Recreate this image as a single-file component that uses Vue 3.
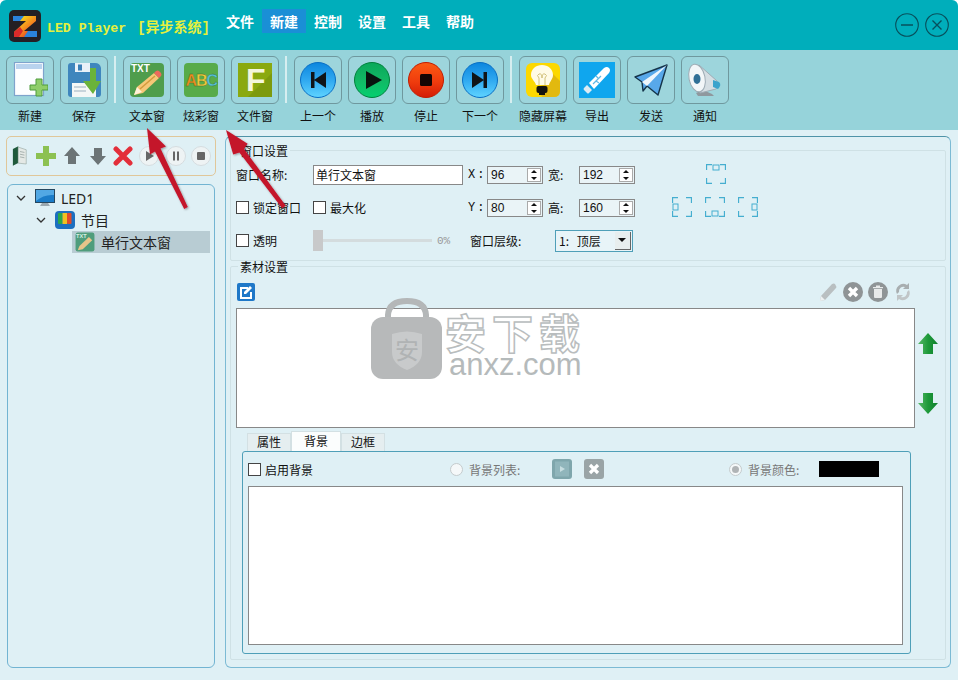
<script setup>
const menus = ['文件', '新建', '控制', '设置', '工具', '帮助']

// 工具列：null 是分隔線
const tools = [
  { label: '新建', icon: 'new' },
  { label: '保存', icon: 'save' },
  null,
  { label: '文本窗', icon: 'txt' },
  { label: '炫彩窗', icon: 'abc' },
  { label: '文件窗', icon: 'file' },
  null,
  { label: '上一个', icon: 'prev' },
  { label: '播放', icon: 'play' },
  { label: '停止', icon: 'stop' },
  { label: '下一个', icon: 'next' },
  null,
  { label: '隐藏屏幕', icon: 'bulb' },
  { label: '导出', icon: 'usb' },
  { label: '发送', icon: 'send' },
  { label: '通知', icon: 'notify' }
]

const discs = {
  prev: { grad: 'url(#gBlue)', ring: '#0a6fc4' },
  play: { grad: 'url(#gGreen)', ring: '#00803c' },
  stop: { grad: 'url(#gRed)', ring: '#c01c00' },
  next: { grad: 'url(#gBlue)', ring: '#0a6fc4' }
}

const aligns = [
  { col: 2, row: 1, shift: 1, mark: [7, 1, 6, 5] },
  { col: 1, row: 2, shift: 0, mark: [1, 7, 5, 6] },
  { col: 2, row: 2, shift: 0, mark: [7, 14, 6, 5] },
  { col: 3, row: 2, shift: 0, mark: [14, 7, 5, 6] }
]
</script>

<template>
  <div class="app">
    <!-- 標題列 -->
    <header class="titlebar">
      <svg class="logo" width="32" height="32" viewBox="0 0 32 32">
        <defs>
          <linearGradient id="gLogo" x1="0" y1="0" x2="1" y2="1">
            <stop offset="0.2" stop-color="#fbd31a" />
            <stop offset="0.55" stop-color="#f4861e" />
            <stop offset="0.85" stop-color="#dd3324" />
          </linearGradient>
        </defs>
        <rect width="32" height="32" rx="5" fill="#241f24" />
        <path d="M5 6h22v5L15 21h13v6H5v-5l12-11H5z" fill="url(#gLogo)" />
        <path d="M4 6h11l-4 5H4zM19 21h9v6H15z" fill="#2a82dc" />
        <path d="M5 22l6-5 3 4-4 6H5z" fill="#d92a2a" />
      </svg>
      <div class="app-name">LED Player<span class="app-sys">[异步系统]</span></div>
      <nav class="menu">
        <span v-for="m in menus" :key="m" class="menu-item" :class="{ active: m === '新建' }">{{ m }}</span>
      </nav>
      <div class="win-btns">
        <svg width="24" height="24" viewBox="0 0 24 24">
          <circle cx="12" cy="12" r="11.3" fill="none" stroke="#07505c" stroke-width="1.1" />
          <path d="M6 12h12" stroke="#07505c" stroke-width="1.6" />
        </svg>
        <svg width="24" height="24" viewBox="0 0 24 24">
          <circle cx="12" cy="12" r="11.3" fill="none" stroke="#07505c" stroke-width="1.1" />
          <path d="M7.5 7.5l9 9M16.5 7.5l-9 9" stroke="#07505c" stroke-width="1.4" />
        </svg>
      </div>
    </header>

    <!-- 工具列 -->
    <div class="toolbar">
      <svg width="0" height="0" class="defs">
        <defs>
          <linearGradient id="gBlue" x1="0" y1="0" x2="0" y2="1">
            <stop offset="0" stop-color="#0c86de" />
            <stop offset="0.5" stop-color="#2fa8f0" />
            <stop offset="1" stop-color="#5fd4ff" />
          </linearGradient>
          <linearGradient id="gGreen" x1="0" y1="0" x2="0" y2="1">
            <stop offset="0" stop-color="#0aa85a" />
            <stop offset="0.5" stop-color="#12b865" />
            <stop offset="1" stop-color="#05d070" />
          </linearGradient>
          <linearGradient id="gRed" x1="0" y1="0" x2="0" y2="1">
            <stop offset="0" stop-color="#fb5a12" />
            <stop offset="0.55" stop-color="#ef3c0e" />
            <stop offset="1" stop-color="#d41c06" />
          </linearGradient>
          <linearGradient id="gArrow" x1="0" y1="0" x2="1" y2="0">
            <stop offset="0" stop-color="#58b868" />
            <stop offset="0.5" stop-color="#1e9a3a" />
            <stop offset="1" stop-color="#0f7f2c" />
          </linearGradient>
        </defs>
      </svg>
      <template v-for="(t, i) in tools" :key="i">
        <div v-if="!t" class="tool-sep"></div>
        <div v-else class="tool">
          <div class="tool-btn">
            <svg width="36" height="36" viewBox="0 0 36 36">
              <template v-if="t.icon === 'new'">
                <rect x="2.5" y="0.500" width="29" height="33" fill="#fdfeff" stroke="#7fa3cc" stroke-width="1.2" />
                <rect x="4" y="2" width="26" height="5" fill="#b9d3ee" />
                <path d="M24 17h6v6h6v5h-6v6h-6v-6h-6v-5h6z" fill="#8fce6a" stroke="#4f9c3c" stroke-width="1" />
              </template>
              <template v-else-if="t.icon === 'save'">
                <path d="M2 4q0-3 3-3h24q5 0 6 5v26q0 3-3 3H5q-3 0-3-3z" fill="#3f86bd" />
                <rect x="9" y="1" width="15" height="9" fill="#e9f1f8" />
                <rect x="12" y="2.500" width="4" height="6" fill="#3a7fb6" />
                <rect x="6" y="21" width="24" height="14" fill="#f4f7f6" />
                <path d="M8 25h12M8 29h12" stroke="#9cb0bf" />
                <path d="M24 6h6v13h5L27 32 17 19h7z" fill="#6ab33a" />
              </template>
              <template v-else-if="t.icon === 'txt'">
                <rect x="1" y="1" width="34" height="34" rx="4" fill="#4f9d4c" />
                <text x="2" y="10" class="svg-txt" fill="#fff">TXT</text>
                <path d="M5 33l3-8 17-14 5 5-16 15z" fill="#f6c777" />
                <path d="M25 11l2-2q2-1 3 0l2 2q1 2 0 3l-2 2z" fill="#ec6a5c" />
                <path d="M5 33l3-8 5 5z" fill="#fff1d8" />
                <path d="M11 27l15-13" stroke="#d39a3c" stroke-width="1.500" />
              </template>
              <template v-else-if="t.icon === 'abc'">
                <rect x="1" y="1" width="34" height="34" rx="4" fill="#58ab49" />
                <text x="2.500" y="24" class="svg-abc" fill="#f08a1c">A</text>
                <text x="13" y="24" class="svg-abc" fill="#f0c83a">B</text>
                <text x="23.500" y="24" class="svg-abc" fill="#54c0d8">C</text>
              </template>
              <template v-else-if="t.icon === 'file'">
                <rect x="1" y="1" width="34" height="34" fill="#8aa90f" />
                <path d="M11 35L35 11v24z" fill="#7d9a0d" />
                <text x="9" y="29" class="svg-f" fill="#f4f6dc">F</text>
              </template>
              <template v-else-if="discs[t.icon]">
                <circle cx="18" cy="18" r="17.500" :fill="discs[t.icon].grad" :stroke="discs[t.icon].ring" stroke-width="1" />
                <path v-if="t.icon === 'prev'" d="M11 10h3.500v16H11zM26 10v16L14 18z" fill="#101418" />
                <path v-if="t.icon === 'play'" d="M12 9l16 9-16 9z" fill="#08140e" />
                <rect v-if="t.icon === 'stop'" x="12" y="12" width="12" height="12" rx="1.500" fill="#140604" />
                <path v-if="t.icon === 'next'" d="M10 10v16l12-8zM21.500 10H25v16h-3.500z" fill="#101418" />
              </template>
              <template v-else-if="t.icon === 'bulb'">
                <rect x="1" y="1" width="34" height="34" rx="6" fill="#fcd800" />
                <path d="M26 10L35 19v10q0 6-6 6H17l-3-8z" fill="#e2b90f" />
                <path d="M17 3c6 0 11 4 11 10 0 4-3 6-4 10H11c-1-4-5-6-5-10 0-6 5-10 11-10z" fill="#fffbe6" />
                <path d="M14 23v-7q-3-3 0-4t3 4q0-5 3-4t0 4v7" fill="none" stroke="#cdbb72" stroke-width="0.900" />
                <rect x="11.500" y="24" width="11" height="7" rx="2" fill="#15130e" />
                <rect x="14" y="31" width="6" height="2" fill="#15130e" />
              </template>
              <template v-else-if="t.icon === 'usb'">
                <rect width="36" height="36" fill="#0fa6ee" />
                <path d="M10 21L25 6q3-2 5 0t0 5L15 27z" fill="#fff" />
                <path d="M8 23l5 5-3 3q-1 1-2 0l-3-3q-1-1 0-2z" fill="#dcebf4" />
                <path d="M14 22l8-8M17 19l3 2M19 16l-2-2" stroke="#5fb8e6" stroke-width="1.200" fill="none" />
              </template>
              <template v-else-if="t.icon === 'send'">
                <path d="M2 15L34 3 25 33 14 24 10 29 9 20z" fill="#58a8ea" stroke="#15344a" stroke-width="1.400" stroke-linejoin="round" />
                <path d="M9 20L34 3 14 24z" fill="#eef6fc" />
              </template>
              <template v-else>
                <path d="M9 31l7-3 9 4 2 2H11z" fill="#8f989e" />
                <path d="M12 3L30 19q3 4-1 8L13 31z" fill="#d5dee3" stroke="#9eacb5" />
                <path d="M26 18l6 2q3 3-1 7l-5-2z" fill="#3ba3cc" />
                <ellipse cx="10" cy="16" rx="8" ry="14" transform="rotate(-12 10 16)" fill="#f2f6f8" stroke="#9eacb5" />
                <ellipse cx="10" cy="17" rx="3.500" ry="5" fill="#2f6f96" />
              </template>
            </svg>
          </div>
          <span class="tool-label">{{ t.label }}</span>
        </div>
      </template>
    </div>

    <main class="body">
      <!-- 左側：節目樹 -->
      <aside class="left">
        <div class="left-tools">
          <svg width="16" height="22" viewBox="0 0 18 22">
            <path d="M1 3l6-3v19l-6 3z" fill="#1f5a3c" />
            <path d="M7 1l9 3v16l-9-1z" fill="#e4e9e6" stroke="#8a9a94" stroke-width="0.600" />
            <path d="M9 6l5 1M9 9l5 1M9 12l5 1" stroke="#a0aca8" />
          </svg>
          <svg width="20" height="20" viewBox="0 0 20 20">
            <path d="M7 0h6v7h7v6h-7v7H7v-7H0V7h7z" fill="#8cc152" />
          </svg>
          <svg width="16" height="18" viewBox="0 0 16 18">
            <path d="M8 0l8 9h-4v8H4V9H0z" fill="#6c7476" />
          </svg>
          <svg width="16" height="18" viewBox="0 0 16 18">
            <path d="M4 1h8v8h4l-8 9-8-9h4z" fill="#6c7476" />
          </svg>
          <svg width="20" height="20" viewBox="0 0 20 20">
            <path d="M3 3l14 14M17 3L3 17" stroke="#e32e3a" stroke-width="5" stroke-linecap="round" />
          </svg>
          <svg v-for="k in ['play', 'pause', 'stop']" :key="k" width="20" height="20" viewBox="0 0 20 20">
            <circle cx="10" cy="10" r="9.500" fill="#eef3f4" stroke="#d5dcdf" />
            <path v-if="k === 'play'" d="M7 5l8 5-8 5z" fill="#666" />
            <path v-if="k === 'pause'" d="M7 5.500h2v9H7zM11 5.500h2v9h-2z" fill="#666" />
            <rect v-if="k === 'stop'" x="6" y="6" width="8" height="8" rx="1" fill="#666" />
          </svg>
        </div>
        <div class="tree">
          <div class="node">
            <svg class="chev" width="10" height="6" viewBox="0 0 10 6"><path d="M1 1l4 4 4-4" fill="none" stroke="#333" stroke-width="1.300" /></svg>
            <svg width="20" height="18" viewBox="0 0 20 18">
              <rect x="0.500" y="0.500" width="19" height="13" fill="#1b7cc8" stroke="#26475f" />
              <path d="M1 1h18v5Q9 5 1 12z" fill="#52a8e4" />
              <path d="M7 14h6l2 3H5z" fill="#9aa8b0" />
            </svg>
            <span class="node-text">LED1</span>
          </div>
          <div class="node lvl2">
            <svg class="chev" width="10" height="6" viewBox="0 0 10 6"><path d="M1 1l4 4 4-4" fill="none" stroke="#333" stroke-width="1.300" /></svg>
            <svg width="20" height="18" viewBox="0 0 20 18">
              <rect width="20" height="18" rx="4" fill="#1c6fc0" />
              <rect x="3" y="2" width="4.500" height="11" fill="#2aa84a" rx="1" />
              <rect x="7.500" y="2" width="4.500" height="11" fill="#f0c020" />
              <rect x="12" y="2" width="4.500" height="11" fill="#e04a2a" rx="1" />
            </svg>
            <span class="node-text">节目</span>
          </div>
          <div class="node lvl3">
            <svg width="20" height="20" viewBox="0 0 36 36">
              <rect x="1" y="1" width="34" height="34" rx="4" fill="#4f9d7c" />
              <text x="2" y="11" class="svg-txt" fill="#d8f0e4">TXT</text>
              <path d="M5 33l3-8 17-16 6 6-17 16z" fill="#e8c48a" />
            </svg>
            <span class="node-text">单行文本窗</span>
          </div>
        </div>
      </aside>

      <!-- 右側：設定 -->
      <section class="panel">
        <fieldset class="group first">
          <legend>窗口设置</legend>
          <div class="form">
            <label class="lb">窗口名称:</label>
            <input class="name-input" value="单行文本窗" />
            <span class="axis">X:</span>
            <div class="spin"><span>96</span><i class="spin-btn"></i></div>
            <span class="lb-s">宽:</span>
            <div class="spin"><span>192</span><i class="spin-btn"></i></div>
            <div class="aligns">
              <svg
                v-for="(a, i) in aligns"
                :key="i"
                width="20"
                height="20"
                viewBox="0 0 20 20"
                :style="{ gridColumn: a.col, gridRow: a.row, marginLeft: a.shift + 'px' }"
              >
                <path d="M.5 6V.5H6M14 .5h5.500V6M19.500 14v5.500H14M6 19.500H.5V14" fill="none" stroke="#45aed0" stroke-width="1.300" />
                <rect :x="a.mark[0]" :y="a.mark[1]" :width="a.mark[2]" :height="a.mark[3]" fill="none" stroke="#45aed0" />
              </svg>
            </div>

            <div class="checks">
              <span class="check-wrap w77"><i class="check"></i>锁定窗口</span>
              <span class="check-wrap"><i class="check"></i>最大化</span>
            </div>
            <span class="axis">Y:</span>
            <div class="spin"><span>80</span><i class="spin-btn"></i></div>
            <span class="lb-s">高:</span>
            <div class="spin"><span>160</span><i class="spin-btn"></i></div>

            <span class="check-wrap"><i class="check"></i>透明</span>
            <div class="slider">
              <i class="thumb"></i>
              <i class="track"></i>
              <span class="pct">0%</span>
            </div>
            <div class="level">
              <span class="lb-level">窗口层级:</span>
              <div class="select">
                <span class="select-text">1: 顶层</span>
                <i class="select-btn"></i>
              </div>
            </div>
          </div>
        </fieldset>

        <fieldset class="group second">
          <legend>素材设置</legend>
          <div class="actions">
            <svg width="18" height="18" viewBox="0 0 18 18">
              <rect width="18" height="18" rx="2" fill="#1f78c8" />
              <path d="M3 4h8v2H5v8h8V9h2v7H3z" fill="#fff" />
              <path d="M7 9l6-6 2 2-6 6H7z" fill="#fff" />
            </svg>
            <div class="actions-right">
              <svg width="20" height="20" viewBox="0 0 20 20">
                <path d="M2 19l1-5L14 2q2-1 3 0l1 2q1 1 0 2L7 18z" fill="#b9bfc1" />
                <path d="M2 19l1-5 4 4z" fill="#eef1f2" />
              </svg>
              <svg width="20" height="20" viewBox="0 0 20 20">
                <circle cx="10" cy="10" r="10" fill="#8f9496" />
                <path d="M6 6l8 8M14 6l-8 8" stroke="#fff" stroke-width="3.400" />
              </svg>
              <svg width="20" height="20" viewBox="0 0 20 20">
                <circle cx="10" cy="10" r="10" fill="#8f9496" />
                <path d="M6 7h8v8q0 1-1 1H7q-1 0-1-1zM5 5h10v1.200H5zM8 3.500h4V5H8z" fill="#e8eaea" />
              </svg>
              <svg width="20" height="20" viewBox="0 0 20 20">
                <path d="M4 12A7 7 0 0 1 14 3l2-2v6h-6l2-2a4.500 4.500 0 0 0-6 5z" fill="#a8aeb0" />
                <path d="M16 8A7 7 0 0 1 6 17l-2 2v-6h6l-2 2a4.500 4.500 0 0 0 6-5z" fill="#c0c5c7" />
              </svg>
            </div>
          </div>
          <div class="list-row">
            <div class="list"></div>
            <div class="arrows">
              <svg width="20" height="21" viewBox="0 0 20 21">
                <path d="M10 0l10 11h-5v10H5V11H0z" fill="url(#gArrow)" />
              </svg>
              <svg width="20" height="21" viewBox="0 0 20 21">
                <path d="M5 0h10v10h5L10 21 0 10h5z" fill="url(#gArrow)" />
              </svg>
            </div>
          </div>

          <div class="tabs">
            <span class="tab">属性</span>
            <span class="tab on">背景</span>
            <span class="tab">边框</span>
          </div>
          <div class="tab-panel">
            <div class="bg-row">
              <span class="check-wrap"><i class="check"></i>启用背景</span>
              <span class="radio-wrap list-radio"><i class="radio"></i>背景列表:</span>
              <svg class="bg-btn" width="20" height="20" viewBox="0 0 20 20">
                <rect width="20" height="20" rx="3" fill="#7fa6ac" />
                <rect x="3" y="2.500" width="14" height="15" fill="#90b5bb" />
                <path d="M8 7l5 3-5 3z" fill="#c6dde0" />
              </svg>
              <svg class="bg-btn" width="20" height="20" viewBox="0 0 20 20">
                <rect width="20" height="20" rx="3" fill="#9aa4a6" />
                <path d="M6 6l8 8M14 6l-8 8" stroke="#fff" stroke-width="3.200" />
              </svg>
              <span class="radio-wrap color-radio"><i class="radio checked"></i>背景颜色:</span>
              <i class="swatch"></i>
            </div>
            <div class="bg-box"></div>
          </div>
        </fieldset>
      </section>
    </main>

    <!-- 水印 -->
    <div class="watermark">
      <svg width="72" height="82" viewBox="0 0 72 82">
        <path d="M17 22V18Q18 4 36 4T55 18v4" fill="none" stroke="#b4b7b8" stroke-width="6" />
        <rect y="20" width="71" height="62" rx="12" fill="#b7b9ba" />
        <path d="M21 37q15-5 30 0v18q0 12-15 18-15-6-15-18z" fill="#c8cacb" />
        <text x="36" y="62" text-anchor="middle" class="wm-mark">安</text>
      </svg>
      <div class="wm-text">
        <div class="wm-cn">安下载</div>
        <div class="wm-en">anxz.com</div>
      </div>
    </div>

    <!-- 標註箭頭 -->
    <svg class="callouts" width="958" height="680" viewBox="0 0 958 680">
      <defs>
        <filter id="fShadow" x="-30%" y="-30%" width="160%" height="160%">
          <feDropShadow dx="1" dy="1" stdDeviation="1" flood-color="#000" flood-opacity="0.350" />
        </filter>
      </defs>
      <g filter="url(#fShadow)" fill="#c4142c">
        <path d="M147 128L166 146.500L160.500 148.500L187.800 207.100L184.200 208.900L155 151.500L150 154.400Z" />
        <path d="M226 130L247.600 143.800L244 149L285.800 205.800L282.200 208.200L239.400 152.500L233.200 154.600Z" />
      </g>
    </svg>
  </div>
</template>

<style scoped>
.app {
  position: relative;
  width: 958px;
  height: 680px;
  display: flex;
  flex-direction: column;
  overflow: hidden;
  background: #dff0f5;
  border-radius: 6px 6px 0 0;
  font-family: "Noto Sans CJK SC", "Liberation Sans", sans-serif;
  font-size: 12px;
  color: #111;
}

.titlebar {
  height: 50px;
  flex: none;
  display: flex;
  align-items: center;
  padding: 0 9px;
  box-sizing: border-box;
  background: #00aebb;
}

.logo {
  flex: none;
  margin-top: 1px;
}

.app-name {
  width: 171px;
  flex: none;
  margin-left: 6px;
  margin-top: 1px;
  font-family: "Liberation Mono", "Noto Sans CJK SC", monospace;
  font-size: 13.200px;
  font-weight: 700;
  color: #e6f03c;
  white-space: nowrap;
}

.app-sys {
  margin-left: 11px;
  font-size: 14px;
}

.menu {
  display: flex;
  margin-bottom: 8px;
}

.menu-item {
  width: 44px;
  height: 24px;
  line-height: 24px;
  text-align: center;
  font-size: 14px;
  font-weight: 700;
  color: #fff;
}

.menu-item.active {
  background: #1a8fd6;
}

.win-btns {
  margin-left: auto;
  display: flex;
  gap: 6px;
}

.toolbar {
  height: 80px;
  flex: none;
  display: flex;
  padding: 6px 0 0 3px;
  box-sizing: border-box;
  background: #96d3da;
}

.defs {
  position: absolute;
}

.tool {
  width: 54px;
  display: flex;
  flex-direction: column;
  align-items: center;
}

.tool-btn {
  width: 48px;
  height: 48px;
  box-sizing: border-box;
  display: flex;
  align-items: center;
  justify-content: center;
  border: 1px solid #6f989e;
  border-radius: 6px;
  background: #9dd5dc;
}

.tool-label {
  margin-top: 3px;
  line-height: 18px;
  white-space: nowrap;
}

.tool-sep {
  width: 2px;
  height: 47px;
  margin: 0 4px 0 3px;
  background: #d6eef0;
}

.svg-txt {
  font-family: "Liberation Sans", sans-serif;
  font-size: 10px;
  font-weight: 700;
}

.svg-abc {
  font-family: "Liberation Sans", sans-serif;
  font-size: 16px;
  font-weight: 700;
  stroke: #3c6a2c;
  stroke-width: 0.300px;
}

.svg-f {
  font-family: "Liberation Sans", sans-serif;
  font-size: 32px;
  font-weight: 700;
}

.body {
  flex: 1;
  min-height: 0;
  display: flex;
  gap: 9px;
  padding: 6px 7px 12px 6px;
}

.left {
  width: 210px;
  flex: none;
  display: flex;
  flex-direction: column;
  gap: 8px;
}

.left-tools {
  height: 40px;
  box-sizing: border-box;
  display: flex;
  align-items: center;
  padding: 0 3px 0 5px;
  gap: 8px;
  border: 1px solid #e0c79a;
  border-radius: 5px;
}

.left-tools svg:nth-child(4) {
  margin-left: 2px;
}

.left-tools svg:nth-child(5) {
  margin-left: -1px;
}

.left-tools svg:nth-child(6) {
  margin-left: -2px;
}

.left-tools svg:nth-child(7) {
  margin-left: -1px;
}

.left-tools svg:nth-child(8) {
  margin-left: -3px;
}

.tree {
  flex: 1;
  margin: 0 1px;
  padding: 2px 0;
  border: 1px solid #72b4d2;
  border-radius: 6px;
}

.node {
  height: 22px;
  display: flex;
  align-items: center;
  padding-left: 8px;
}

.node.lvl2 {
  padding-left: 28px;
}

.node.lvl3 {
  margin: 0 4px 0 64px;
  padding-left: 3px;
  background: #b8ccd3;
}

.chev {
  margin-right: 9px;
}

.node-text {
  margin-left: 6px;
  font-size: 14px;
  font-family: "Noto Sans", "Noto Sans CJK SC", sans-serif;
  color: #222;
}

.panel {
  flex: 1;
  min-width: 0;
  display: flex;
  flex-direction: column;
  padding: 0 4px 7px;
  box-sizing: border-box;
  border: 1px solid #7cbad4;
  border-top-color: #4f93a8;
  border-radius: 6px;
}

.group {
  margin: 0;
  padding: 0 5px;
  min-width: 0;
  border: 1px solid #cfe1e5;
  border-radius: 2px;
}

.group legend {
  margin-left: 2px;
  padding: 0 2px;
  line-height: 17px;
}

.group.first {
  margin-top: 5px;
  height: 119px;
  box-sizing: border-box;
}

.group.second {
  flex: 1;
  min-height: 0;
  margin-top: -3px;
}

.form {
  display: grid;
  grid-template-columns: 77px 155px 19px 61px 31px 56px 1fr;
  grid-auto-rows: 33px;
  align-items: center;
  margin-top: -1px;
}

.lb {
  white-space: nowrap;
}

.name-input {
  width: 150px;
  height: 20px;
  box-sizing: border-box;
  padding: 0 2px;
  border: 1px solid #888;
  outline: none;
  background: #fff;
  font: inherit;
  color: #111;
}

.axis {
  font-family: "Liberation Mono", monospace;
  font-size: 12px;
  letter-spacing: 2px;
}

.lb-s {
  white-space: nowrap;
}

.spin {
  width: 56px;
  height: 18px;
  box-sizing: border-box;
  display: flex;
  align-items: center;
  justify-content: space-between;
  padding-left: 3px;
  border: 1px solid #888;
  background: #eaf4f7;
  font-family: "Liberation Sans", sans-serif;
}

.spin-btn {
  position: relative;
  width: 14px;
  height: 14px;
  margin-right: 1px;
  border: 1px solid #aaa;
  box-sizing: border-box;
  background: linear-gradient(#fff 47%, #999 47%, #999 53%, #fff 53%);
}

.spin-btn::before,
.spin-btn::after {
  content: "";
  position: absolute;
  left: 3px;
  border-left: 3px solid transparent;
  border-right: 3px solid transparent;
}

.spin-btn::before {
  top: 1px;
  border-bottom: 3px solid #111;
}

.spin-btn::after {
  bottom: 1px;
  border-top: 3px solid #111;
}

.aligns {
  grid-column: 7;
  grid-row: 1 / span 3;
  align-self: start;
  margin: 6px 0 0 37px;
  display: grid;
  grid-template-columns: 20px 20px 20px;
  grid-template-rows: 20px 20px;
  gap: 13px;
}

.checks {
  grid-column: 1 / span 2;
  display: flex;
}

.check-wrap {
  display: inline-flex;
  align-items: center;
  white-space: nowrap;
}

.w77 {
  width: 77px;
}

.check {
  width: 13px;
  height: 13px;
  margin-right: 4px;
  box-sizing: border-box;
  border: 1px solid #444;
  background: #fff;
}

.slider {
  grid-column: 2;
  position: relative;
  height: 22px;
  display: flex;
  align-items: center;
}

.thumb {
  width: 10px;
  height: 21px;
  background: #c8c9ca;
}

.track {
  width: 109px;
  height: 3px;
  background: #d4dcde;
}

.pct {
  margin-left: 5px;
  font-family: "Liberation Mono", monospace;
  font-size: 11px;
  color: #999;
}

.level {
  grid-column: 3 / span 4;
  display: flex;
  align-items: center;
}

.lb-level {
  width: 87px;
  padding-left: 2px;
  box-sizing: border-box;
}

.select {
  width: 78px;
  height: 22px;
  box-sizing: border-box;
  display: flex;
  align-items: center;
  justify-content: space-between;
  padding-left: 3px;
  border: 1px solid #4f9fb8;
  background: #e8f4f8;
}

.select-text {
  word-spacing: 5px;
}

.select-btn {
  position: relative;
  width: 16px;
  height: 18px;
  margin-right: 1px;
  background: #e8eeee;
  border-right: 1px solid #666;
  border-bottom: 1px solid #666;
  box-sizing: border-box;
}

.select-btn::after {
  content: "";
  position: absolute;
  left: 3px;
  top: 6px;
  border-left: 4px solid transparent;
  border-right: 4px solid transparent;
  border-top: 4px solid #111;
}

.actions {
  height: 33px;
  display: flex;
  align-items: center;
  justify-content: space-between;
  margin: 0 27px 0 1px;
}

.actions-right {
  display: flex;
  gap: 5px;
}

.list-row {
  display: flex;
}

.list {
  width: 679px;
  height: 120px;
  box-sizing: border-box;
  border: 1px solid #888;
  background: #fff;
}

.arrows {
  margin-left: 3px;
  padding-top: 25px;
  display: flex;
  flex-direction: column;
  gap: 39px;
}

.tabs {
  display: flex;
  align-items: flex-end;
  height: 24px;
  margin-left: 11px;
  margin-bottom: -1px;
}

.tab {
  position: relative;
  width: 44px;
  height: 19px;
  line-height: 16px;
  box-sizing: border-box;
  text-align: center;
  background: #e5eef0;
  border: 1px solid #d3e0e3;
  border-bottom: 0;
}

.tab.on {
  width: 50px;
  height: 21px;
  line-height: 17px;
  background: #fbfdfd;
}

.tab-panel {
  position: relative;
  margin: 0 0 0 6px;
  width: 669px;
  height: 203px;
  box-sizing: border-box;
  padding: 0 7px 8px 5px;
  border: 1px solid #4f9fb8;
  border-radius: 3px;
  display: flex;
  flex-direction: column;
}

.bg-row {
  height: 34px;
  display: flex;
  align-items: center;
}

.radio-wrap {
  display: inline-flex;
  align-items: center;
  color: #777;
  white-space: nowrap;
}

.list-radio {
  margin-left: 137px;
  width: 102px;
}

.bg-btn {
  flex: none;
  margin-right: 12px;
}

.color-radio {
  margin-left: 113px;
  width: 90px;
}

.radio {
  position: relative;
  width: 13px;
  height: 13px;
  margin-right: 6px;
  box-sizing: border-box;
  border: 1px solid #c4cbcd;
  border-radius: 50%;
  background: #f5f8f9;
}

.radio.checked::after {
  content: "";
  position: absolute;
  inset: 2px;
  border-radius: 50%;
  background: #b0b4b6;
}

.swatch {
  width: 60px;
  height: 16px;
  background: #000;
}

.bg-box {
  flex: 1;
  border: 1px solid #888;
  background: #fff;
}

.watermark {
  position: absolute;
  left: 371px;
  top: 297px;
  display: flex;
  gap: 2px;
  pointer-events: none;
}

.wm-mark {
  font-family: "Noto Sans CJK SC", sans-serif;
  font-size: 24px;
  fill: #b0b3b4;
}

.wm-text {
  margin-top: 14px;
  width: 140px;
}

.wm-cn {
  font-family: "Noto Sans CJK SC", sans-serif;
  font-size: 41px;
  font-weight: 700;
  line-height: 40px;
  letter-spacing: 6px;
  white-space: nowrap;
  color: #fff;
  -webkit-text-stroke: 1.500px #b9bdbe;
}

.wm-en {
  margin-left: 4px;
  font-family: "Liberation Sans", sans-serif;
  font-size: 31px;
  line-height: 28px;
  color: #b5babb;
}

.callouts {
  position: absolute;
  left: 0;
  top: 0;
  pointer-events: none;
}
</style>
